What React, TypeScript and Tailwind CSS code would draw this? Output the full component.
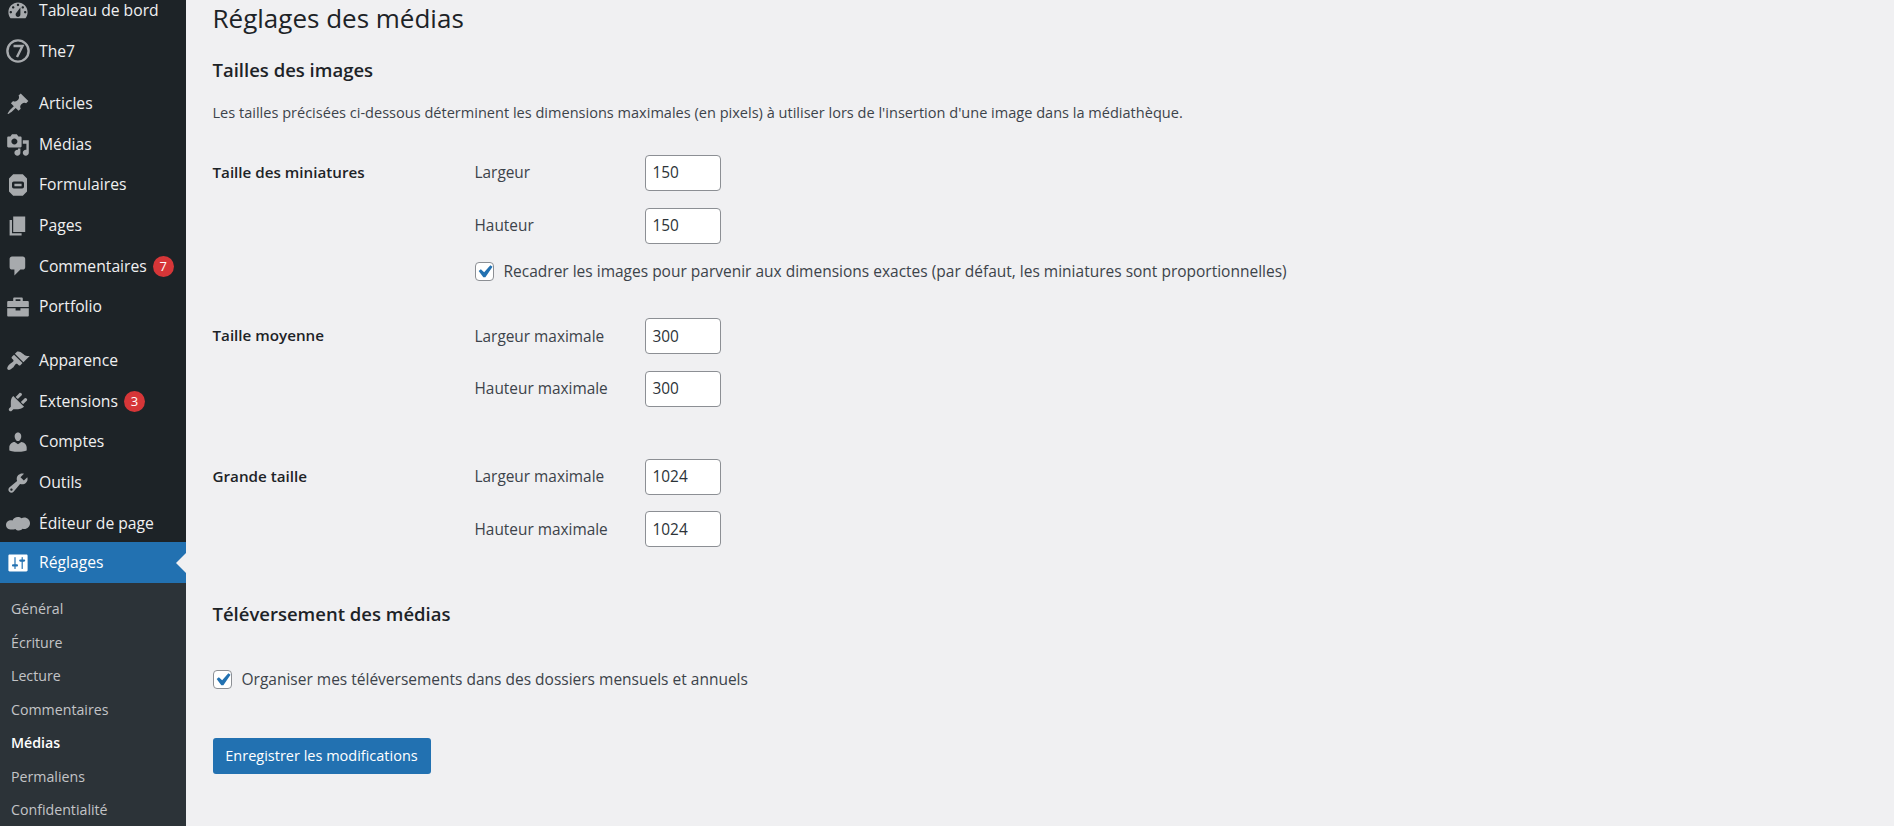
const P: Record<string, string> = {
  dash: "M3.76 16h12.48c1.1-1.37 1.76-3.11 1.76-5 0-4.42-3.58-8-8-8s-8 3.58-8 8c0 1.89.66 3.63 1.76 5zM10 4c.55 0 1 .45 1 1s-.45 1-1 1-1-.45-1-1 .45-1 1-1zM6 6c.55 0 1 .45 1 1s-.45 1-1 1-1-.45-1-1 .45-1 1-1zm8 0c.55 0 1 .45 1 1s-.45 1-1 1-1-.45-1-1 .45-1 1-1zm-5.37 5.55L12 7v6c0 1.1-.9 2-2 2s-2-.9-2-2c0-.57.24-1.08.63-1.45zM4 10c.55 0 1 .45 1 1s-.45 1-1 1-1-.45-1-1 .45-1 1-1zm12 0c.55 0 1 .45 1 1s-.45 1-1 1-1-.45-1-1 .45-1 1-1z",
  pin: "M10.44 3.02l1.82-1.82 6.36 6.35-1.83 1.82c-1.05-.68-2.48-.57-3.41.36l-.75.75c-.92.93-1.04 2.35-.35 3.41l-1.83 1.82-2.41-2.41-2.8 2.79c-.42.42-3.38 2.71-3.8 2.29s1.86-3.39 2.28-3.81l2.79-2.79L4.1 9.36l1.83-1.82c1.05.69 2.48.57 3.4-.36l.75-.75c.93-.92 1.05-2.35.36-3.41z",
  media: "M13 11V4c0-.55-.45-1-1-1h-1.67L9 1H5L3.67 3H2c-.55 0-1 .45-1 1v7c0 .55.45 1 1 1h10c.55 0 1-.45 1-1zM7 4.5c1.38 0 2.5 1.12 2.5 2.5S8.38 9.5 7 9.5 4.5 8.38 4.5 7 5.62 4.5 7 4.5zM14 6h5v10.5c0 1.38-1.12 2.5-2.5 2.5S14 17.88 14 16.5s1.12-2.5 2.5-2.5c.17 0 .34.02.5.05V9h-3V6zm-4 8.05V13h2v3.5c0 1.38-1.12 2.5-2.5 2.5S7 17.88 7 16.5 8.12 14 9.5 14c.17 0 .34.02.5.05z",
  form: "M6 1h8l3.5 3.5v11L14 19H6l-3.5-3.5v-11zM6.5 7A1.5 1.5 0 0 0 5 8.5v3A1.5 1.5 0 0 0 6.5 13h7a1.5 1.5 0 0 0 1.5-1.5v-3A1.5 1.5 0 0 0 13.5 7zM7 9h6v2H7z",
  page: "M6 15V2h10v13H6zm-1 1h8v2H3V5h2v11z",
  comment: "M5 2h9c1.1 0 2 .9 2 2v7c0 1.1-.9 2-2 2h-2l-5 5v-5H5c-1.1 0-2-.9-2-2V4c0-1.1.9-2 2-2z",
  case: "M7 2h6c.6 0 1 .4 1 1v2h4c.6 0 1 .4 1 1v4H1V6c0-.6.4-1 1-1h4V3c0-.6.4-1 1-1zm1 1.5V5h4V3.5zM1 11h7v2h4v-2h7v6c0 .6-.4 1-1 1H2c-.6 0-1-.4-1-1z",
  brush: "M14.48 11.06L7.41 3.99l1.5-1.5c.5-.56 2.3-.47 3.51.32 1.21.8 1.43 1.28 2.91 2.1 1.18.64 2.45 1.26 4.45.85zm-.71.71L6.7 4.7 4.93 6.47c-.39.39-.39 1.02 0 1.41l1.06 1.06c.39.39.39 1.03 0 1.42-.6.6-1.43 1.11-2.21 1.69-.35.26-.7.53-1.01.84C1.43 14.23.4 16.08 1.4 17.07c.99 1 2.84-.03 4.18-1.36.31-.31.58-.66.85-1.02.57-.78 1.08-1.61 1.69-2.21.39-.39 1.02-.39 1.41 0l1.06 1.06c.39.39 1.02.39 1.41 0z",
  plug: "M13.11 4.36L9.87 7.6 8 5.73l3.24-3.24c.35-.34 1.05-.2 1.56.32.52.51.66 1.21.31 1.55zm-8 1.77l.91-1.12 9.01 9.01-1.19.84c-.71.71-2.63 1.16-3.82 1.16H6.14L4.9 17.26c-.59.59-1.54.59-2.12 0-.59-.58-.59-1.53 0-2.12l1.24-1.24v-3.88c0-1.13.4-3.19 1.09-3.89zm7.26 3.97l3.24-3.24c.34-.35 1.04-.21 1.55.31.52.51.66 1.21.31 1.55l-3.24 3.25z",
  user: "M10 9.25c-2.27 0-2.73-3.44-2.73-3.44C7 4.02 7.82 2 9.97 2c2.16 0 2.98 2.02 2.71 3.81 0 0-.41 3.44-2.68 3.44zm0 2.57L12.72 10c2.39 0 4.52 2.33 4.52 4.53v2.49s-3.65 1.13-7.24 1.13c-3.65 0-7.24-1.13-7.24-1.13v-2.49c0-2.25 1.94-4.48 4.47-4.48z",
  tool: "M16.68 9.77c-1.34 1.34-3.3 1.67-4.95.99l-5.41 6.52c-.99.99-2.59.99-3.58 0s-.99-2.59 0-3.57l6.52-5.42c-.68-1.65-.35-3.61.99-4.95 1.28-1.28 3.12-1.62 4.72-1.06l-2.89 2.89 2.82 2.82 2.86-2.87c.53 1.58.18 3.39-1.08 4.67zM3.81 16.21c.4.39 1.04.39 1.43 0 .4-.4.4-1.04 0-1.43-.39-.4-1.03-.4-1.43 0-.39.39-.39 1.03 0 1.43z",
  cloud: "M4.6 15.5C2.2 15.5 0 14.2 0 11.7c0-2.3 1.9-3.9 4.2-3.9.4 0 .8 0 1.2.2C6.2 6.2 7.8 5 9.9 5c1.2 0 2.2.4 3 1.1.7-.4 1.5-.6 2.3-.6 2.7 0 4.8 2.1 4.8 4.7 0 2.6-2.1 4.8-4.8 4.8-.5 0-1-.1-1.4-.2-.7.9-1.8 1.4-3 1.4-1.2 0-2.3-.5-3-1.3-.4.3-2.1.6-3.2.6z",
  set: "M18 16V4c0-.55-.45-1-1-1H3c-.55 0-1 .45-1 1v12c0 .55.45 1 1 1h14c.55 0 1-.45 1-1zM8 11h1c.55 0 1 .45 1 1s-.45 1-1 1H8v1.5c0 .28-.22.5-.5.5s-.5-.22-.5-.5V13H6c-.55 0-1-.45-1-1s.45-1 1-1h1V5.5c0-.28.22-.5.5-.5s.5.22.5.5V11zm5-2h-1c-.55 0-1-.45-1-1s.45-1 1-1h1V5.5c0-.28.22-.5.5-.5s.5.22.5.5V7h1c.55 0 1 .45 1 1s-.45 1-1 1h-1v5.5c0 .28-.22.5-.5.5s-.5-.22-.5-.5V9z",
};

function Ico({ d, active }: { d: string; active?: boolean }) {
  return (
    <svg viewBox="0 0 20 20" className={`w-6 h-6 shrink-0 ${active ? "fill-white" : "fill-[#a7aaad]"}`}>
      <path fillRule="evenodd" d={d} />
    </svg>
  );
}

function The7() {
  return (
    <svg viewBox="0 0 24 24" className="w-6 h-6 shrink-0 fill-none stroke-[#a7aaad]">
      <circle cx="12" cy="12" r="10.6" strokeWidth="2.4" />
      <path d="M7.5 7h9l-5.5 11" strokeWidth="2.4" />
    </svg>
  );
}

function Item({ label, icon, badge, custom }: { label: string; icon?: string; badge?: string; custom?: boolean }) {
  return (
    <div className="h-[40.6px] flex items-center pl-[6px] text-[15.7px] text-[#f0f0f1]">
      {custom ? <The7 /> : <Ico d={P[icon!]} />}
      <span className="ml-[9px]">{label}</span>
      {badge && (
        <span className="ml-[6px] w-[21px] h-[21px] rounded-full bg-[#d63638] text-white text-[13px] flex items-center justify-center">
          {badge}
        </span>
      )}
    </div>
  );
}

function Field({ label, value }: { label: string; value: string }) {
  return (
    <div className="flex items-center h-[36px]">
      <span className="w-[170px] text-[15.4px] text-[#3c434a]">{label}</span>
      <div className="w-[76px] h-[36px] bg-white border border-[#8c8f94] rounded-[4px] flex items-center px-[7px] text-[15.4px] text-[#2c3338]">
        {value}
      </div>
    </div>
  );
}

function Check({ label }: { label: string }) {
  return (
    <div className="flex items-center text-[15.5px] text-[#3c434a]">
      <span className="w-[19px] h-[19px] bg-white border border-[#8c8f94] rounded-[4px] flex items-center justify-center mr-[10px] shrink-0">
        <svg viewBox="3 3 14 14" className="w-[17px] h-[17px] fill-[#2271b1]">
          <path d="M14.83 4.89l1.8 1.2-5.9 8.7H9.02L5.2 9.67l1.8-1.5 2.7 2.5z" />
        </svg>
      </span>
      {label}
    </div>
  );
}

function Row({ title, children, className }: { title: string; children: React.ReactNode; className?: string }) {
  return (
    <div className={`flex ${className ?? ""}`}>
      <div className="w-[262px] pt-[6px] text-[15.2px] font-semibold text-[#1d2327]">{title}</div>
      <div className="flex flex-col gap-[16.5px]">{children}</div>
    </div>
  );
}

export default function App() {
  const sub = ["Général", "Écriture", "Lecture", "Commentaires", "Médias", "Permaliens", "Confidentialité"];
  return (
    <div className="w-[1894px] h-[826px] overflow-hidden flex bg-[#f0f0f2] [font-family:'Open_Sans',sans-serif]">
      <aside className="w-[186px] shrink-0 bg-[#1d2327] overflow-hidden">
        <div className="-mt-[9.5px]">
          <Item label="Tableau de bord" icon="dash" />
          <Item label="The7" custom />
          <div className="h-[12px]" />
          <Item label="Articles" icon="pin" />
          <Item label="Médias" icon="media" />
          <Item label="Formulaires" icon="form" />
          <Item label="Pages" icon="page" />
          <Item label="Commentaires" icon="comment" badge="7" />
          <Item label="Portfolio" icon="case" />
          <div className="h-[13.5px]" />
          <Item label="Apparence" icon="brush" />
          <Item label="Extensions" icon="plug" badge="3" />
          <Item label="Comptes" icon="user" />
          <Item label="Outils" icon="tool" />
          <Item label="Éditeur de page" icon="cloud" />
        </div>
        <div className="relative -mt-[1.5px] h-[41px] bg-[#2271b1] flex items-center pl-[6px] text-[15.7px] text-white">
          <Ico d={P.set} active />
          <span className="ml-[9px]">Réglages</span>
          <span className="absolute right-0 top-[11px] border-y-[10px] border-y-transparent border-r-[10px] border-r-[#f0f0f2]" />
        </div>
        <div className="bg-[#2c3338] pt-[9px] h-[260px]">
          {sub.map((s) => (
            <div
              key={s}
              className={`h-[33.5px] flex items-center pl-[11px] text-[14.2px] ${s === "Médias" ? "text-white font-semibold" : "text-[#c3c4c7]"}`}
            >
              {s}
            </div>
          ))}
        </div>
      </aside>
      <main className="flex-1 pl-[26.5px]">
        <h1 className="text-[26px] leading-[36px] text-[#1d2327]">Réglages des médias</h1>
        <h2 className="mt-[22px] text-[18.5px] leading-[24px] font-semibold text-[#1d2327]">Tailles des images</h2>
        <p className="mt-[19px] text-[14.55px] leading-[22px] text-[#3c434a]">
          Les tailles précisées ci-dessous déterminent les dimensions maximales (en pixels) à utiliser lors de l'insertion d'une image dans la médiathèque.
        </p>
        <Row title="Taille des miniatures" className="mt-[32px]">
          <Field label="Largeur" value="150" />
          <Field label="Hauteur" value="150" />
          <div>
            <Check label="Recadrer les images pour parvenir aux dimensions exactes (par défaut, les miniatures sont proportionnelles)" />
          </div>
        </Row>
        <Row title="Taille moyenne" className="mt-[35px]">
          <Field label="Largeur maximale" value="300" />
          <Field label="Hauteur maximale" value="300" />
        </Row>
        <Row title="Grande taille" className="mt-[52px]">
          <Field label="Largeur maximale" value="1024" />
          <Field label="Hauteur maximale" value="1024" />
        </Row>
        <h2 className="mt-[55px] text-[18.5px] leading-[24px] font-semibold text-[#1d2327]">Téléversement des médias</h2>
        <div className="mt-[42px]">
          <Check label="Organiser mes téléversements dans des dossiers mensuels et annuels" />
        </div>
        <button className="mt-[46px] w-[218px] h-[36px] rounded-[3px] bg-[#2271b1] text-white text-[14.5px]">
          Enregistrer les modifications
        </button>
      </main>
    </div>
  );
}
